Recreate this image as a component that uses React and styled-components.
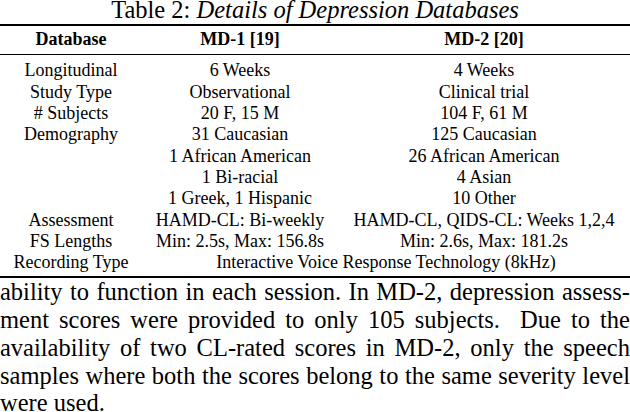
import React from 'react';
import styled, { createGlobalStyle } from 'styled-components';

const GlobalStyle = createGlobalStyle`
  html, body {
    margin: 0;
    padding: 0;
    background: #fff;
  }
  body {
    width: 630px;
    height: 412px;
    overflow: hidden;
    font-family: 'Liberation Serif', 'Times New Roman', serif;
    color: #000;
  }
`;

const Page = styled.div`
  width: 630px;
  display: flex;
  flex-direction: column;
`;

const Caption = styled.div`
  font-size: 24.5px;
  line-height: 18px;
  padding-top: 0.5px;
  text-align: center;
  margin-bottom: 5.5px;

  em {
    font-style: italic;
  }
`;

const Table = styled.div`
  border-top: 2px solid #000;
  border-bottom: 2px solid #000;
  font-size: 18px;
  line-height: 21.33px;
`;

const Head = styled.div`
  display: grid;
  grid-template-columns: 142px 196px 292px;
  padding: 3px 0 4px;
  border-bottom: 1px solid #000;
  font-weight: bold;
  text-align: center;
`;

const Body = styled.div`
  padding: 5px 0 2.5px;
`;

const Row = styled.div`
  display: grid;
  grid-template-columns: 142px 196px 292px;
  text-align: center;
  white-space: nowrap;
`;

const Cell = styled.div`
  grid-column: ${(p) => (p.$span ? `span ${p.$span}` : 'auto')};
`;

const Para = styled.div`
  font-size: 24.5px;
  line-height: 27.8px;
  white-space: nowrap;
`;

const Line = styled.div`
  text-align: ${(p) => (p.$last ? 'left' : 'justify')};
  text-align-last: ${(p) => (p.$last ? 'left' : 'justify')};
  white-space: normal;
`;

const rows = [
  ['Longitudinal', ['6 Weeks'], ['4 Weeks']],
  ['Study Type', ['Observational'], ['Clinical trial']],
  ['# Subjects', ['20 F, 15 M'], ['104 F, 61 M']],
  [
    'Demography',
    ['31 Caucasian', '1 African American', '1 Bi-racial', '1 Greek, 1 Hispanic'],
    ['125 Caucasian', '26 African American', '4 Asian', '10 Other'],
  ],
  ['Assessment', ['HAMD-CL: Bi-weekly'], ['HAMD-CL, QIDS-CL: Weeks 1,2,4']],
  ['FS Lengths', ['Min: 2.5s, Max: 156.8s'], ['Min: 2.6s, Max: 181.2s']],
];

const lines = [
  'ability to function in each session. In MD-2, depression assess-',
  'ment scores were provided to only 105 subjects.\u00a0 Due to the',
  'availability of two CL-rated scores in MD-2, only the speech',
  'samples where both the scores belong to the same severity level',
];

export default function App() {
  return (
    <>
      <GlobalStyle />
      <Page>
        <Caption>
          Table 2: <em>Details of Depression Databases</em>
        </Caption>

        <Table>
          <Head>
            <div>Database</div>
            <div>MD-1 [19]</div>
            <div>MD-2 [20]</div>
          </Head>
          <Body>
            {rows.map(([label, a, b]) => (
              <Row key={label}>
                <Cell>{label}</Cell>
                <Cell>
                  {a.map((t) => (
                    <div key={t}>{t}</div>
                  ))}
                </Cell>
                <Cell>
                  {b.map((t) => (
                    <div key={t}>{t}</div>
                  ))}
                </Cell>
              </Row>
            ))}
            <Row>
              <Cell>Recording Type</Cell>
              <Cell $span={2}>Interactive Voice Response Technology (8kHz)</Cell>
            </Row>
          </Body>
        </Table>

        <Para>
          {lines.map((l) => (
            <Line key={l}>{l}</Line>
          ))}
          <Line $last>were used.</Line>
        </Para>
      </Page>
    </>
  );
}
